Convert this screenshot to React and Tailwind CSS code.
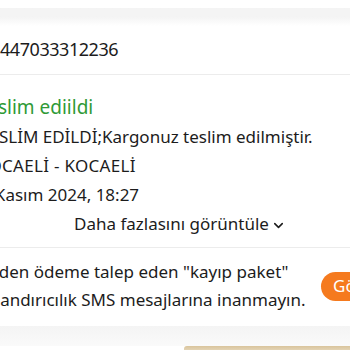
import React from "react";
import { ChevronDown } from "lucide-react";

export default function App() {
  return (
    <div className="w-[350px] h-[350px] overflow-hidden bg-white text-[#1c1c1c] font-['Noto_Sans',sans-serif]">
      <div className="h-[8px] bg-white" />
      <div className="h-[18px] bg-gradient-to-b from-[#f4f4f4] via-[#f4f4f4] to-white" />

      <div className="h-[49px] flex items-center border-b border-[#ececec] pb-[3px]">
        <span className="text-[18px] leading-none tracking-tight">447033312236</span>
      </div>

      <div className="-ml-[22px] pt-[18px] flex flex-col text-[17px] leading-[29px] whitespace-nowrap">
        <div className="text-[19px] text-[#2f9a36]">Teslim ediildi</div>
        <div className="ml-[2px]">TESLİM EDİLDİ;Kargonuz teslim edilmiştir.</div>
        <div className="tracking-[0.3px]">KOCAELİ - KOCAELİ</div>
        <div className="-ml-[7px]">28 Kasım 2024, 18:27</div>
      </div>

      <div className="h-[39px] flex items-start pt-[3px] pl-[74px] border-b border-[#ececec]">
        <span className="text-[17px] leading-[24px]">Daha fazlasını görüntüle</span>
        <ChevronDown size={15} strokeWidth={2.5} className="ml-[2px] mt-[6px]" />
      </div>

      <div className="flex items-center h-[78px] pb-[2px]">
        <div className="-ml-[23px] text-[17px] leading-[28px] w-[329px] shrink-0 whitespace-nowrap">
          <div>Sizden ödeme talep eden "kayıp paket"</div>
          <div className="-ml-[2px]">dolandırıcılık SMS mesajlarına inanmayın.</div>
        </div>
        <div className="ml-[15px] shrink-0 h-[29px] px-[12px] rounded-full bg-[#f57a1e] text-white text-[17px] flex items-center">
          Görüntüle
        </div>
      </div>

      <div className="h-[20px] bg-gradient-to-b from-[#f4f4f4] to-[#fafafa]" />
      <div className="flex h-[10px]">
        <div className="w-[184px] bg-white" />
        <div className="flex-1 bg-gradient-to-b from-[#d9c49c] to-[#f3ebd9] rounded-tl-[3px]" />
      </div>
    </div>
  );
}
